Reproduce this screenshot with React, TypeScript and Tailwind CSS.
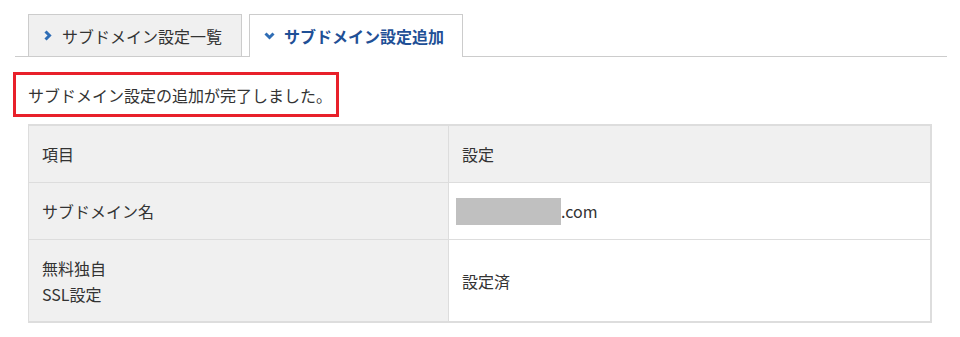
type Row = {
  label: string[];
  value: React.ReactNode;
};

const rows: Row[] = [
  {
    label: ["サブドメイン名"],
    value: (
      <span className="flex items-center">
        <span className="ml-[-6px] inline-block h-[27px] w-[105px] bg-[#c0c0c0]" />
        <span>.com</span>
      </span>
    ),
  },
  { label: ["無料独自", "SSL設定"], value: "設定済" },
];

function Chevron({ down }: { down?: boolean }) {
  return (
    <svg width="11" height="11" viewBox="0 0 11 11" className="text-[#2f6db5]">
      <path
        d={down ? "M1.5 3.5 L5.5 7.5 L9.5 3.5" : "M3.5 1.5 L7.5 5.5 L3.5 9.5"}
        fill="none"
        stroke="currentColor"
        strokeWidth="3"
      />
    </svg>
  );
}

export default function App() {
  return (
    <div
      className="h-[337px] w-[960px] bg-white text-[16px] text-[#333]"
      style={{ fontFamily: '"Noto Sans CJK JP", "Liberation Sans", sans-serif' }}
    >
      <div className="ml-[15px] flex w-[932px] gap-[7px] border-b border-[#ccc] pl-[13px] pt-[14px]">
        <div className="flex h-[42px] w-[214px] items-center gap-[9px] border border-b-0 border-[#ccc] bg-[#f0f0f0] pl-[13px]">
          <Chevron />
          <span className="leading-none">サブドメイン設定一覧</span>
        </div>
        <div className="-mb-px flex h-[43px] w-[214px] items-center gap-[9px] border border-b-0 border-[#ccc] bg-white pb-px pl-[14px]">
          <Chevron down />
          <span className="font-bold leading-none text-[#1f5096]">サブドメイン設定追加</span>
        </div>
      </div>

      <div className="ml-[13px] mt-[15px] flex h-[45px] w-[326px] items-center whitespace-nowrap border-[3px] border-[#e8202a] pl-3">
        サブドメイン設定の追加が完了しました。
      </div>

      <div className="ml-[28px] mt-[7px] w-[904px] border-b-2 border-l border-r-2 border-t-2 border-[#ddd]">
        <div className="flex h-[57px] border-b border-[#ddd] bg-[#f0f0f0]">
          <div className="flex w-[420px] items-center border-r border-[#ddd] px-[13px]">項目</div>
          <div className="flex flex-1 items-center px-[13px]">設定</div>
        </div>
        {rows.map((row, i) => (
          <div
            key={i}
            className={`flex ${i === 0 ? "h-[57px] border-b border-[#ddd]" : "h-[81px]"}`}
          >
            <div className="flex w-[420px] flex-col justify-center border-r border-[#ddd] bg-[#f0f0f0] px-[13px] leading-[26px]">
              {row.label.map((l) => (
                <span key={l}>{l}</span>
              ))}
            </div>
            <div className="flex flex-1 items-center px-[13px]">{row.value}</div>
          </div>
        ))}
      </div>
    </div>
  );
}
